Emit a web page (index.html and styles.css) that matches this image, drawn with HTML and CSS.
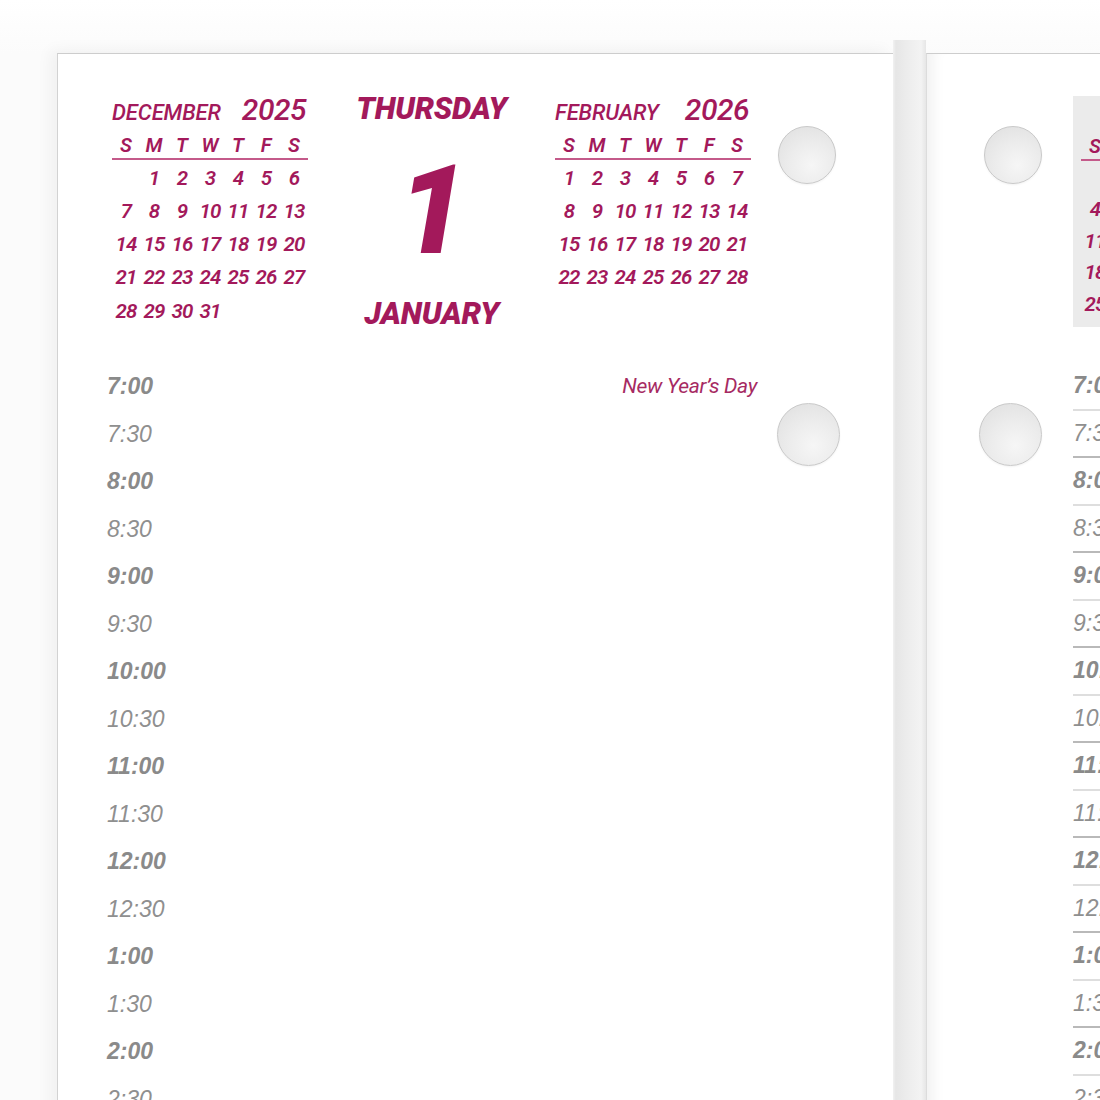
FILE: index.html
```html
<!DOCTYPE html>
<html lang="en">
<head>
<meta charset="utf-8">
<title>Daily Planner – Thursday, January 1</title>
<link rel="stylesheet" href="styles.css">
</head>
<body>
<div class="desk">
  <section class="page page-left">
    <span class="hole hole-top"></span>
    <span class="hole hole-mid"></span>
    <header class="page-head">
      <div class="mini-cal">
        <div class="mc-title"><span class="mc-month">DECEMBER</span><span class="mc-year">2025</span></div>
        <div class="mc-dow"><span>S</span><span>M</span><span>T</span><span>W</span><span>T</span><span>F</span><span>S</span></div>
        <div class="mc-days">
          <span></span><span>1</span><span>2</span><span>3</span><span>4</span><span>5</span><span>6</span>
          <span>7</span><span>8</span><span>9</span><span>10</span><span>11</span><span>12</span><span>13</span>
          <span>14</span><span>15</span><span>16</span><span>17</span><span>18</span><span>19</span><span>20</span>
          <span>21</span><span>22</span><span>23</span><span>24</span><span>25</span><span>26</span><span>27</span>
          <span>28</span><span>29</span><span>30</span><span>31</span>
        </div>
      </div>
      <div class="today">
        <div class="today-dow">THURSDAY</div>
        <div class="today-num">1</div>
        <div class="today-month">JANUARY</div>
      </div>
      <div class="mini-cal">
        <div class="mc-title"><span class="mc-month">FEBRUARY</span><span class="mc-year">2026</span></div>
        <div class="mc-dow"><span>S</span><span>M</span><span>T</span><span>W</span><span>T</span><span>F</span><span>S</span></div>
        <div class="mc-days">
          <span>1</span><span>2</span><span>3</span><span>4</span><span>5</span><span>6</span><span>7</span>
          <span>8</span><span>9</span><span>10</span><span>11</span><span>12</span><span>13</span><span>14</span>
          <span>15</span><span>16</span><span>17</span><span>18</span><span>19</span><span>20</span><span>21</span>
          <span>22</span><span>23</span><span>24</span><span>25</span><span>26</span><span>27</span><span>28</span>
        </div>
      </div>
    </header>
    <div class="schedule">
      <div class="slot hour"><span class="time">7:00</span><span class="event">New Year’s Day</span></div>
      <div class="slot half"><span class="time">7:30</span></div>
      <div class="slot hour"><span class="time">8:00</span></div>
      <div class="slot half"><span class="time">8:30</span></div>
      <div class="slot hour"><span class="time">9:00</span></div>
      <div class="slot half"><span class="time">9:30</span></div>
      <div class="slot hour"><span class="time">10:00</span></div>
      <div class="slot half"><span class="time">10:30</span></div>
      <div class="slot hour"><span class="time">11:00</span></div>
      <div class="slot half"><span class="time">11:30</span></div>
      <div class="slot hour"><span class="time">12:00</span></div>
      <div class="slot half"><span class="time">12:30</span></div>
      <div class="slot hour"><span class="time">1:00</span></div>
      <div class="slot half"><span class="time">1:30</span></div>
      <div class="slot hour"><span class="time">2:00</span></div>
      <div class="slot half"><span class="time">2:30</span></div>
    </div>
  </section>

  <div class="gutter"></div>

  <section class="page page-right">
    <span class="hole hole-top"></span>
    <span class="hole hole-mid"></span>
    <header class="page-head-right">
      <div class="mini-cal shaded">
        <div class="mc-title"><span class="mc-month">JANUARY</span><span class="mc-year">2026</span></div>
        <div class="mc-dow"><span>S</span><span>M</span><span>T</span><span>W</span><span>T</span><span>F</span><span>S</span></div>
        <div class="mc-days">
          <span></span><span></span><span></span><span></span><span>1</span><span>2</span><span>3</span>
          <span>4</span><span>5</span><span>6</span><span>7</span><span>8</span><span>9</span><span>10</span>
          <span>11</span><span>12</span><span>13</span><span>14</span><span>15</span><span>16</span><span>17</span>
          <span>18</span><span>19</span><span>20</span><span>21</span><span>22</span><span>23</span><span>24</span>
          <span>25</span><span>26</span><span>27</span><span>28</span><span>29</span><span>30</span><span>31</span>
        </div>
      </div>
    </header>
    <div class="schedule ruled">
      <div class="slot hour"><span class="time">7:00</span></div>
      <div class="slot half"><span class="time">7:30</span></div>
      <div class="slot hour"><span class="time">8:00</span></div>
      <div class="slot half"><span class="time">8:30</span></div>
      <div class="slot hour"><span class="time">9:00</span></div>
      <div class="slot half"><span class="time">9:30</span></div>
      <div class="slot hour"><span class="time">10:00</span></div>
      <div class="slot half"><span class="time">10:30</span></div>
      <div class="slot hour"><span class="time">11:00</span></div>
      <div class="slot half"><span class="time">11:30</span></div>
      <div class="slot hour"><span class="time">12:00</span></div>
      <div class="slot half"><span class="time">12:30</span></div>
      <div class="slot hour"><span class="time">1:00</span></div>
      <div class="slot half"><span class="time">1:30</span></div>
      <div class="slot hour"><span class="time">2:00</span></div>
      <div class="slot half"><span class="time">2:30</span></div>
    </div>
  </section>
</div>
</body>
</html>
```

FILE: styles.css
```css
* { box-sizing: border-box; }

html, body {
  margin: 0;
  padding: 0;
  background: #ffffff;
}

body {
  width: 1100px;
  height: 1100px;
  overflow: hidden;
}

.desk {
  display: flex;
  align-items: flex-start;
  padding: 53px 0 0 57px;
  width: 1300px;
  height: 1100px;
  background: linear-gradient(to bottom, #ffffff 0, #fbfbfb 53px);
}

/* ---------- pages ---------- */
.page {
  position: relative;
  flex: none;
  height: 1200px;
  background: #ffffff;
  border-top: 1px solid #cdcdcd;
}

.page-left {
  width: 836px;
  border-left: 1px solid #d2d2d2;
  box-shadow: -7px -3px 14px rgba(0, 0, 0, 0.045);
}

.gutter {
  flex: none;
  width: 33px;
  height: 1200px;
  margin-top: -13px;
  background: linear-gradient(to right, #f2f2f2 0, #e6e6e6 3px, #ececec 40%, #f3f3f3 85%, #e6e6e6 100%);
}

.page-right {
  width: 400px;
  border-left: 1px solid #dcdcdc;
  box-shadow: inset 16px 0 14px -10px rgba(0, 0, 0, 0.06);
}

/* ---------- binder holes ---------- */
.hole {
  position: absolute;
  border-radius: 50%;
  border: 1px solid #c9c9c9;
  background: radial-gradient(circle at 58% 68%, #f6f6f6 0, #ececec 45%, #dedede 100%);
  box-shadow: 0 1px 2px rgba(0, 0, 0, 0.05);
}

.page-left .hole-top { left: 720px; top: 72px; width: 58px; height: 58px; }
.page-left .hole-mid { left: 719px; top: 349px; width: 63px; height: 63px; }
.page-right .hole-top { left: 57px; top: 72px; width: 58px; height: 58px; }
.page-right .hole-mid { left: 52px; top: 349px; width: 63px; height: 63px; }

/* ---------- header ---------- */
.page-head {
  display: grid;
  grid-template-columns: 196px 247px 196px;
  align-items: start;
  height: 309px;
  padding: 39px 0 0 54px;
}

.mini-cal {
  font-family: "Roboto", "Inter", "Liberation Sans", sans-serif;
  font-style: italic;
  color: #a3195b;
}

.mc-title {
  display: flex;
  justify-content: space-between;
  align-items: baseline;
  height: 39px;
  line-height: 34px;
  padding: 0 2px 0 0;
}

.mc-month {
  font-size: 22px;
  font-weight: 500;
  letter-spacing: -0.1px;
}

.mc-year {
  font-size: 30px;
  font-weight: 500;
  letter-spacing: -0.5px;
}

.mc-dow {
  display: grid;
  grid-template-columns: repeat(7, 28px);
  height: 28px;
  line-height: 26px;
  font-size: 20px;
  font-weight: 600;
  text-align: center;
  border-bottom: 2px solid #c45a8a;
}

.mc-days {
  display: grid;
  grid-template-columns: repeat(7, 28px);
  grid-auto-rows: 33.25px;
  margin-top: 1.5px;
  line-height: 33.25px;
  font-size: 20.5px;
  font-weight: 600;
  text-align: center;
  letter-spacing: -0.8px;
}

/* ---------- today block ---------- */
.today {
  display: flex;
  flex-direction: column;
  align-items: center;
  font-family: "Roboto", "Inter", "Liberation Sans", sans-serif;
  font-style: italic;
  font-weight: 900;
  color: #a3195b;
}

.today-dow {
  font-size: 30.5px;
  line-height: 31px;
  letter-spacing: -0.2px;
}

.today-num {
  margin-top: 24.7px;
  font-size: 124px;
  line-height: 124px;
  padding-left: 2px;
}

.today-month {
  margin-top: 25.8px;
  font-size: 31px;
  line-height: 31px;
  letter-spacing: -0.2px;
}

/* ---------- right page header ---------- */
.page-head-right {
  height: 309px;
  padding: 42px 0 0 146px;
}

.mini-cal.shaded {
  width: 230px;
  height: 231px;
  padding: 0 0 0 8px;
  background: #ebebeb;
}

.shaded .mc-title {
  height: 38px;
  justify-content: flex-end;
  gap: 20px;
  padding-right: 4px;
}
.shaded .mc-dow { height: 27px; line-height: 25px; }
.shaded .mc-days { grid-auto-rows: 31.75px; line-height: 31.75px; margin-top: 1px; }

/* ---------- schedule ---------- */
.schedule {
  padding-left: 49px;
  width: 699px;
}

.page-right .schedule {
  padding-left: 146px;
  width: 400px;
}

.slot {
  display: flex;
  justify-content: space-between;
  align-items: center;
  height: 47.5px;
  line-height: 47.5px;
}

.time {
  font-family: "Liberation Sans", Arial, sans-serif;
  font-style: italic;
  font-size: 23px;
  color: #8a8a8a;
}

.hour .time { font-weight: 700; }
.half .time { font-weight: 400; color: #8f8f8f; }

.event {
  font-family: "Roboto", "Inter", "Liberation Sans", sans-serif;
  font-style: italic;
  font-weight: 400;
  font-size: 21px;
  color: #a62a62;
  letter-spacing: -0.3px;
}

.ruled .slot {
  border-bottom: 2px solid #dedede;
}

.ruled .slot.half {
  border-bottom-color: #b9b9b9;
}
```
